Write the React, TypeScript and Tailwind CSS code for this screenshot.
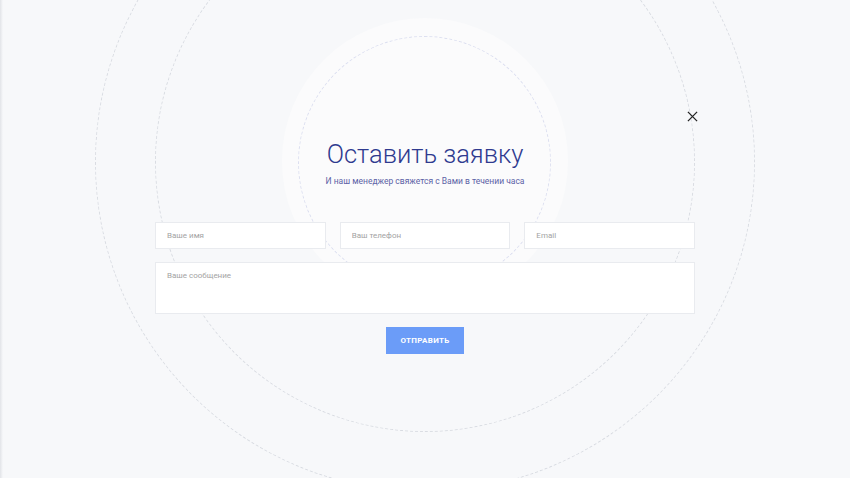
import React from 'react';

const font = { fontFamily: 'Roboto, "Noto Sans", sans-serif' };

const Field: React.FC<{ placeholder: string }> = ({ placeholder }) => (
  <input
    placeholder={placeholder}
    className="h-[27px] w-full border border-[#e9ebef] bg-white px-[11px] text-[8px] text-[#555] outline-none placeholder:text-[#a3a3a3]"
  />
);

export default function App() {
  return (
    <div className="relative h-[478px] w-[850px] overflow-hidden bg-[#f7f8fa]" style={font}>
      {/* left edge shade */}
      <div className="absolute inset-y-0 left-0 w-[3px] bg-gradient-to-r from-[#e2e4e8] to-[#f7f8fa]" />

      {/* decorative rings */}
      <div className="absolute left-[95px] top-[-168px] h-[660px] w-[660px] rounded-full border border-dashed border-[#d9dce2]" />
      <div className="absolute left-[155px] top-[-108px] h-[540px] w-[540px] rounded-full border border-dashed border-[#d9dce2]" />
      <div className="absolute left-[282px] top-[18px] h-[286px] w-[286px] rounded-full bg-[#fbfbfc]" />
      <div className="absolute left-[298px] top-[36px] h-[253px] w-[253px] rounded-full border border-dashed border-[#dcdff0]" />

      <button className="absolute left-[687px] top-[111px] h-[11px] w-[11px] text-[#222]">
        <svg viewBox="0 0 12 12" className="h-full w-full" fill="none" stroke="currentColor" strokeWidth="1.4">
          <path d="M1 1l10 10M11 1L1 11" />
        </svg>
      </button>

      <div className="relative flex flex-col items-center pt-[136px]">
        <h1 className="text-[25.5px] font-light leading-[36px] text-[#2f3a8f]">Оставить заявку</h1>
        <p className="mt-[3px] text-[8.5px] leading-[12px] text-[#5b62a6]">
          И наш менеджер свяжется с Вами в течении часа
        </p>

        <form className="mt-[35px] flex w-[540px] flex-col items-center">
          <div className="grid w-full grid-cols-3 gap-[14px]">
            <Field placeholder="Ваше имя" />
            <Field placeholder="Ваш телефон" />
            <Field placeholder="Email" />
          </div>
          <textarea
            placeholder="Ваше сообщение"
            className="mt-[13px] h-[52px] w-full resize-none border border-[#e9ebef] bg-white px-[11px] py-[8px] text-[8px] leading-[10px] outline-none placeholder:text-[#a3a3a3]"
          />
          <button
            type="button"
            className="mt-[13px] h-[27px] w-[78px] bg-[#6b9cf8] text-[8px] font-bold tracking-[0.3px] text-white"
          >
            ОТПРАВИТЬ
          </button>
        </form>
      </div>
    </div>
  );
}
